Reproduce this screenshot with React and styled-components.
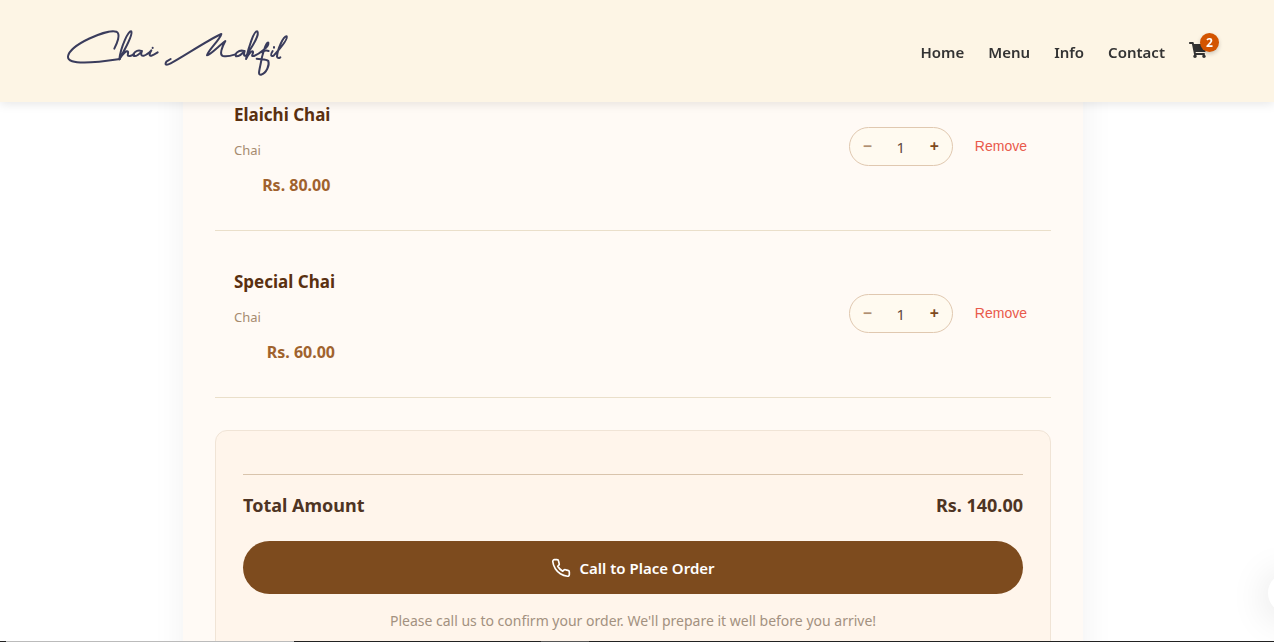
import React, { useState } from "react";
import styled, { createGlobalStyle } from "styled-components";
import { FaShoppingCart } from "react-icons/fa";
import { FiPhone } from "react-icons/fi";

const GlobalStyle = createGlobalStyle`
  * { box-sizing: border-box; }
  html { scrollbar-width: none; }
  body {
    margin: 0;
    background: #fff;
    color: #4a2c17;
    font-family: "Segoe UI", "Noto Sans", "Open Sans", sans-serif;
  }
  h2, p { margin: 0; }
`;

const Header = styled.header`
  position: fixed;
  inset: 0 0 auto 0;
  z-index: 10;
  height: 102px;
  padding: 2px 65px 0 65px;
  display: flex;
  align-items: center;
  justify-content: space-between;
  background: rgba(253, 245, 228, 0.97);
  box-shadow: 0 2px 10px rgba(0, 0, 0, 0.1);
`;

const HomeLink = styled.a`
  display: flex;
  color: #3a3c5c;
`;

const Nav = styled.nav`
  display: flex;
  align-items: center;
  gap: 24px;
`;

const NavLink = styled.a`
  color: #333;
  font-size: 15px;
  line-height: 24px;
  font-weight: 600;
  text-decoration: none;
`;

const CartLink = styled.a`
  position: relative;
  display: flex;
  padding: 0 2px 4px 0;
  color: #333;
`;

const Badge = styled.span`
  position: absolute;
  top: -8px;
  right: -10px;
  width: 19px;
  height: 19px;
  border-radius: 50%;
  background: #d35400;
  color: #fff;
  font-size: 12px;
  line-height: 19px;
  font-weight: 700;
  text-align: center;
  box-shadow: 0 2px 4px rgba(0, 0, 0, 0.2);
`;

const Page = styled.main`
  padding-right: 8px;
`;

const CartPanel = styled.section`
  max-width: 900px;
  margin: 0 auto;
  padding: 64px 32px 32px;
  background: #fffaf5;
  box-shadow: 0 0 32px rgba(0, 0, 0, 0.06);
`;

const ItemList = styled.ul`
  list-style: none;
  margin: 0 0 32px;
  padding: 0;
`;

const Item = styled.li`
  display: flex;
  align-items: flex-start;
  justify-content: space-between;
  height: 167px;
  padding: 38px 19px 0;
  border-bottom: 1px solid #eadfca;
`;

const Details = styled.div`
  display: grid;
  row-gap: 10px;
`;

const ItemName = styled.h2`
  color: #5a3010;
  font-size: 17px;
  line-height: 26px;
  font-weight: 700;
`;

const Category = styled.p`
  color: #a68b6f;
  font-size: 13px;
  line-height: 24px;
`;

const Price = styled.p`
  color: #a0622d;
  font-size: 16px;
  line-height: 26px;
  font-weight: 700;
  text-align: right;
`;

const Actions = styled.div`
  display: flex;
  align-items: center;
  gap: 16px;
  padding-top: 25px;
`;

const Stepper = styled.div`
  display: flex;
  align-items: center;
  justify-content: space-between;
  width: 104px;
  height: 39px;
  border: 1px solid #e0c8b0;
  border-radius: 20px;
  background: #fffaf0;
`;

const StepButton = styled.button`
  width: 35px;
  height: 36px;
  padding: 0 0 2px;
  border: 0;
  background: none;
  color: #7e4a1e;
  font: 700 16px/34px "Noto Sans", sans-serif;
  cursor: pointer;
  &:disabled { opacity: 0.6; cursor: default; }
`;

const Quantity = styled.output`
  color: #5f4a3c;
  font-size: 15px;
  line-height: 36px;
`;

const RemoveButton = styled.button`
  padding: 4px 5px 6px 6px;
  border: 0;
  background: none;
  color: #e9594b;
  font: 14px/18px "Liberation Sans", Arial, sans-serif;
  cursor: pointer;
`;

const Summary = styled.section`
  padding: 43px 27px 27px;
  border: 1px solid #f0e4d6;
  border-radius: 12px;
  background: #fff5eb;
`;

const Total = styled.div`
  display: flex;
  justify-content: space-between;
  padding: 15px 0 21px;
  border-top: 1px solid #d9c4ac;
  color: #4e3423;
  font-size: 18px;
  line-height: 30px;
  font-weight: 700;
`;

const CallButton = styled.button`
  display: flex;
  align-items: center;
  justify-content: center;
  gap: 8px;
  width: 100%;
  height: 53px;
  border: 0;
  border-radius: 27px;
  background: #7d4b1e;
  color: #fff;
  font: 600 15px/24px "Segoe UI", "Noto Sans", sans-serif;
  cursor: pointer;
`;

const Note = styled.p`
  margin-top: 16px;
  color: #a39180;
  font-size: 14px;
  line-height: 22px;
  text-align: center;
`;

const FloatingButton = styled.button`
  position: fixed;
  right: -34px;
  bottom: 29px;
  width: 40px;
  height: 40px;
  border: 0;
  border-radius: 50%;
  background: #fff;
  box-shadow: 0 4px 40px rgba(0, 0, 0, 0.14);
`;

const BottomEdge = styled.div`
  position: fixed;
  inset: auto 0 0 0;
  z-index: 20;
  height: 1px;
  background: linear-gradient(to right, #222 6px, #bbb 6px 294px, #222 294px 541px, #555 541px 589px, #222 589px);
`;

const Logo = () => (
  <svg width="225" height="51" viewBox="45 50 675 153" fill="none" stroke="currentColor" strokeWidth="6" strokeLinecap="round" strokeLinejoin="round" aria-hidden="true">
    <path d="M193 115C200 101 214 71 199 64C170 56 61 102 54 138C51 166 135 157 210 146" />
    <path d="M208 147C222 120 250 75 244 63C236 58 212 110 208 147C218 129 231 119 234 124C236 132 228 138 240 137C246 136 250 133 252 131" />
    <path d="M274 122C260 117 246 130 252 137C262 139 270 129 276 122C272 132 272 138 282 136C291 133 299 125 304 120C296 132 298 138 304 136C312 134 317 130 323 126M308 112V113" />
    <path d="M362 146L349 154C342 166 352 164 362 159C402 138 465 94 514 71C510 88 476 118 471 135C482 133 508 105 526 92C516 110 507 134 519 137C534 140 544 136 556 132" />
    <path d="M582 122C566 117 552 132 558 138C568 139 578 129 584 122C580 134 582 140 590 134C605 110 630 75 622 63C612 60 596 110 588 146C594 132 606 119 609 124C611 131 600 139 612 137C630 130 658 108 655 97C648 94 636 134 631 165C627 184 624 194 633 193C650 188 659 164 655 152C648 144 632 148 620 145" />
    <path d="M636 126C642 121 650 120 656 122M668 122C660 134 663 140 671 136C691 114 715 86 710 78C700 77 682 118 681 139C683 145 688 143 691 141M672 110V112" />
  </svg>
);

const products = [
  { name: "Elaichi Chai", category: "Chai", price: 80 },
  { name: "Special Chai", category: "Chai", price: 60 },
];

const money = (n) => `Rs. ${n.toFixed(2)}`;

function CartItem({ item, onChange, onRemove }) {
  return (
    <Item>
      <Details>
        <ItemName>{item.name}</ItemName>
        <Category>{item.category}</Category>
        <Price>{money(item.price)}</Price>
      </Details>
      <Actions>
        <Stepper>
          <StepButton disabled={item.qty === 1} aria-label={`Decrease ${item.name}`} onClick={() => onChange(item.qty - 1)}>−</StepButton>
          <Quantity>{item.qty}</Quantity>
          <StepButton aria-label={`Increase ${item.name}`} onClick={() => onChange(item.qty + 1)}>+</StepButton>
        </Stepper>
        <RemoveButton onClick={onRemove}>Remove</RemoveButton>
      </Actions>
    </Item>
  );
}

export default function App() {
  const [items, setItems] = useState(products.map((p) => ({ ...p, qty: 1 })));
  const setQty = (name, qty) => setItems(items.map((i) => (i.name === name ? { ...i, qty } : i)));
  const total = items.reduce((sum, i) => sum + i.price * i.qty, 0);

  return (
    <>
      <GlobalStyle />
      <Header>
        <HomeLink href="#home" aria-label="Chai Mahfil"><Logo /></HomeLink>
        <Nav>
          <NavLink href="#home">Home</NavLink>
          <NavLink href="#menu">Menu</NavLink>
          <NavLink href="#info">Info</NavLink>
          <NavLink href="#contact">Contact</NavLink>
          <CartLink href="#cart" aria-label="Cart">
            <FaShoppingCart size={18} />
            <Badge>{items.length}</Badge>
          </CartLink>
        </Nav>
      </Header>
      <Page>
        <CartPanel>
          <ItemList>
            {items.map((item) => (
              <CartItem
                key={item.name}
                item={item}
                onChange={(qty) => setQty(item.name, qty)}
                onRemove={() => setItems(items.filter((i) => i !== item))}
              />
            ))}
          </ItemList>
          <Summary>
            <Total><span>Total Amount</span><span>{money(total)}</span></Total>
            <CallButton><FiPhone size={20} />Call to Place Order</CallButton>
            <Note>Please call us to confirm your order. We'll prepare it well before you arrive!</Note>
          </Summary>
        </CartPanel>
      </Page>
      <FloatingButton aria-label="Open chat" />
      <BottomEdge />
    </>
  );
}
